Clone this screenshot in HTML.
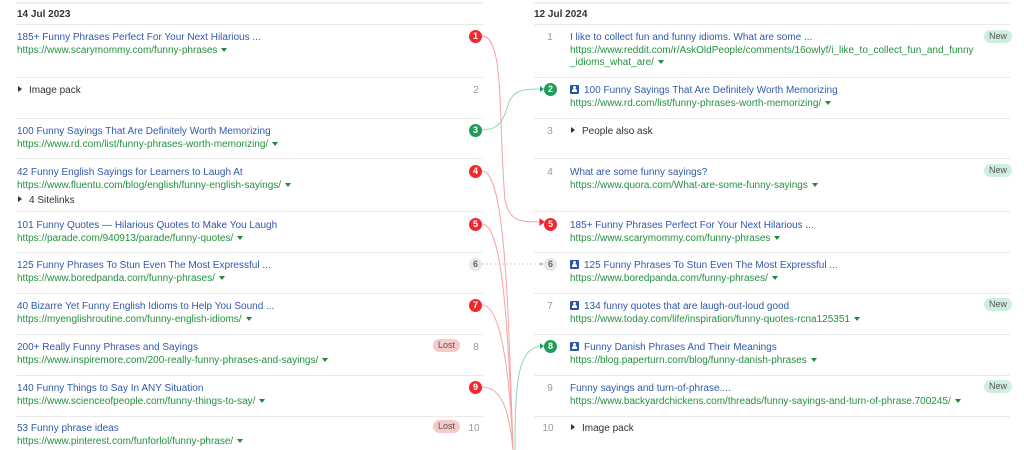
<!DOCTYPE html>
<html><head><meta charset="utf-8"><style>
*{margin:0;padding:0;box-sizing:border-box}
body{width:1024px;height:450px;overflow:hidden;background:#fff;font-family:"Liberation Sans",Arial,sans-serif;font-size:10px;position:relative}
.a{position:absolute;white-space:nowrap;line-height:12px;margin-top:1.5px}
.t{color:#3159ab}
.u{color:#24913f}
.u:after{content:"";display:inline-block;margin-left:4px;border-left:3px solid transparent;border-right:3px solid transparent;border-top:4px solid #1f8a3c;vertical-align:1px}
.g{color:#333}
.n{color:#999;text-align:center;width:14px}
.h{font-weight:bold;color:#333}
.sl{position:absolute;height:1px;background:#e9e9e9}
.b{position:absolute;width:13px;height:13px;border-radius:50%;color:#fff;font-weight:bold;font-size:9px;line-height:13px;text-align:center}
.r{background:#f0282d}.gr{background:#1e9c58}.gy{background:#e8e8e8;color:#666}
.tri:before{content:"";display:inline-block;border-top:3px solid transparent;border-bottom:3px solid transparent;border-left:4px solid #333;margin-right:7px;vertical-align:1px}
.pill{position:absolute;height:13px;line-height:13px;border-radius:7px;font-size:9px;padding:0 5px;color:#555}
.lost{background:#f8c9c9}.new{background:#cfeedd}
.ic{display:inline-block;width:9px;height:9px;background:#2b55a6;margin-right:5px;vertical-align:-1px;position:relative;border-radius:1px}
.ic:after{content:"";position:absolute;left:2px;bottom:2px;width:5px;height:3px;background:#fff;border-radius:2px 2px 0 0}
.ic:before{content:"";position:absolute;left:3px;top:1.5px;width:3px;height:3px;background:#fff;border-radius:50%}
</style></head><body>
<div class="sl" style="left:16px;top:2px;width:467px;background:#eee;height:2px"></div>
<div class="sl" style="left:534px;top:2px;width:476px;background:#eee;height:2px"></div>
<div class="a h" style="left:17px;top:7px">14 Jul 2023</div>
<div class="a h" style="left:534px;top:7px">12 Jul 2024</div>

<div class="sl" style="left:16px;top:24px;width:467px"></div><div class="sl" style="left:534px;top:24px;width:476px"></div>
<div class="sl" style="left:16px;top:77px;width:467px"></div><div class="sl" style="left:534px;top:77px;width:476px"></div>
<div class="sl" style="left:16px;top:118px;width:467px"></div><div class="sl" style="left:534px;top:118px;width:476px"></div>
<div class="sl" style="left:16px;top:158px;width:467px"></div><div class="sl" style="left:534px;top:158px;width:476px"></div>
<div class="sl" style="left:16px;top:211px;width:467px"></div><div class="sl" style="left:534px;top:211px;width:476px"></div>
<div class="sl" style="left:16px;top:252px;width:467px"></div><div class="sl" style="left:534px;top:252px;width:476px"></div>
<div class="sl" style="left:16px;top:293px;width:467px"></div><div class="sl" style="left:534px;top:293px;width:476px"></div>
<div class="sl" style="left:16px;top:334px;width:467px"></div><div class="sl" style="left:534px;top:334px;width:476px"></div>
<div class="sl" style="left:16px;top:375px;width:467px"></div><div class="sl" style="left:534px;top:375px;width:476px"></div>
<div class="sl" style="left:16px;top:416px;width:467px"></div><div class="sl" style="left:534px;top:416px;width:476px"></div>

<svg style="position:absolute;left:0;top:0" width="1024" height="450" fill="none" stroke-width="1">
<g stroke="#f7a3a3">
<path d="M482,36 C505,36 498,120 505,200 C510,222 520,222 543,222"/>
<path d="M482,171 C505,171 508,300 513,450"/>
<path d="M482,224 C502,224 508,320 513,450"/>
<path d="M482,305 C502,305 510,380 513,450"/>
<path d="M482,387 C505,387 510,420 513,450"/>
</g>
<g stroke="#f0282d" fill="#f0282d"><path d="M540,219 L544,222 L540,225Z"/></g>
<g stroke="#8fd9b0">
<path d="M482,130 C505,130 505,110 510,100 C516,89 525,89 543,89"/>
<path d="M515,450 C515,380 518,346 543,346"/>
</g>
<g fill="#1e9c58"><path d="M540,86 L544,89 L540,92Z"/><path d="M540,343 L544,346 L540,349Z"/></g>
<path d="M482,264 L542,264" stroke="#ccc" stroke-dasharray="2,2"/>
<path d="M540,262 L544,264 L540,266Z" fill="#bbb"/>
</svg>

<div class="a t" style="left:17px;top:30px">185+ Funny Phrases Perfect For Your Next Hilarious ...</div>
<div class="a u" style="left:17px;top:43px">https://www.scarymommy.com/funny-phrases</div>
<div class="b r" style="left:469px;top:30px">1</div>

<div class="a g tri" style="left:18px;top:83px">Image pack</div>
<div class="a n" style="left:469px;top:83px">2</div>

<div class="a t" style="left:17px;top:124px">100 Funny Sayings That Are Definitely Worth Memorizing</div>
<div class="a u" style="left:17px;top:137px">https://www.rd.com/list/funny-phrases-worth-memorizing/</div>
<div class="b gr" style="left:469px;top:124px">3</div>

<div class="a t" style="left:17px;top:165px">42 Funny English Sayings for Learners to Laugh At</div>
<div class="a u" style="left:17px;top:178px">https://www.fluentu.com/blog/english/funny-english-sayings/</div>
<div class="a g tri" style="left:18px;top:193px">4 Sitelinks</div>
<div class="b r" style="left:469px;top:165px">4</div>

<div class="a t" style="left:17px;top:218px">101 Funny Quotes — Hilarious Quotes to Make You Laugh</div>
<div class="a u" style="left:17px;top:231px">https://parade.com/940913/parade/funny-quotes/</div>
<div class="b r" style="left:469px;top:218px">5</div>

<div class="a t" style="left:17px;top:258px">125 Funny Phrases To Stun Even The Most Expressful ...</div>
<div class="a u" style="left:17px;top:271px">https://www.boredpanda.com/funny-phrases/</div>
<div class="b gy" style="left:469px;top:258px">6</div>

<div class="a t" style="left:17px;top:299px">40 Bizarre Yet Funny English Idioms to Help You Sound ...</div>
<div class="a u" style="left:17px;top:312px">https://myenglishroutine.com/funny-english-idioms/</div>
<div class="b r" style="left:469px;top:299px">7</div>

<div class="a t" style="left:17px;top:340px">200+ Really Funny Phrases and Sayings</div>
<div class="a u" style="left:17px;top:353px">https://www.inspiremore.com/200-really-funny-phrases-and-sayings/</div>
<div class="pill lost" style="left:433px;top:339px">Lost</div>
<div class="a n" style="left:469px;top:340px">8</div>

<div class="a t" style="left:17px;top:381px">140 Funny Things to Say In ANY Situation</div>
<div class="a u" style="left:17px;top:394px">https://www.scienceofpeople.com/funny-things-to-say/</div>
<div class="b r" style="left:469px;top:381px">9</div>

<div class="a t" style="left:17px;top:421px">53 Funny phrase ideas</div>
<div class="a u" style="left:17px;top:434px">https://www.pinterest.com/funforlol/funny-phrase/</div>
<div class="pill lost" style="left:433px;top:420px">Lost</div>
<div class="a n" style="left:467px;top:421px">10</div>

<div class="a n" style="left:543px;top:30px">1</div>
<div class="a t" style="left:570px;top:30px">I like to collect fun and funny idioms. What are some ...</div>
<div class="a u" style="left:570px;top:43px"><span style="display:block">https://www.reddit.com/r/AskOldPeople/comments/16owlyf/i_like_to_collect_fun_and_funny</span>_idioms_what_are/</div>
<div class="pill new" style="left:984px;top:30px">New</div>

<div class="b gr" style="left:544px;top:83px">2</div>
<div class="a t" style="left:570px;top:83px"><span class="ic"></span>100 Funny Sayings That Are Definitely Worth Memorizing</div>
<div class="a u" style="left:570px;top:96px">https://www.rd.com/list/funny-phrases-worth-memorizing/</div>

<div class="a n" style="left:543px;top:124px">3</div>
<div class="a g tri" style="left:571px;top:124px">People also ask</div>

<div class="a n" style="left:543px;top:165px">4</div>
<div class="a t" style="left:570px;top:165px">What are some funny sayings?</div>
<div class="a u" style="left:570px;top:178px">https://www.quora.com/What-are-some-funny-sayings</div>
<div class="pill new" style="left:984px;top:164px">New</div>

<div class="b r" style="left:544px;top:218px">5</div>
<div class="a t" style="left:570px;top:218px">185+ Funny Phrases Perfect For Your Next Hilarious ...</div>
<div class="a u" style="left:570px;top:231px">https://www.scarymommy.com/funny-phrases</div>

<div class="b gy" style="left:544px;top:258px">6</div>
<div class="a t" style="left:570px;top:258px"><span class="ic"></span>125 Funny Phrases To Stun Even The Most Expressful ...</div>
<div class="a u" style="left:570px;top:271px">https://www.boredpanda.com/funny-phrases/</div>

<div class="a n" style="left:543px;top:299px">7</div>
<div class="a t" style="left:570px;top:299px"><span class="ic"></span>134 funny quotes that are laugh-out-loud good</div>
<div class="a u" style="left:570px;top:312px">https://www.today.com/life/inspiration/funny-quotes-rcna125351</div>
<div class="pill new" style="left:984px;top:298px">New</div>

<div class="b gr" style="left:544px;top:340px">8</div>
<div class="a t" style="left:570px;top:340px"><span class="ic"></span>Funny Danish Phrases And Their Meanings</div>
<div class="a u" style="left:570px;top:353px">https://blog.paperturn.com/blog/funny-danish-phrases</div>

<div class="a n" style="left:543px;top:381px">9</div>
<div class="a t" style="left:570px;top:381px">Funny sayings and turn-of-phrase....</div>
<div class="a u" style="left:570px;top:394px">https://www.backyardchickens.com/threads/funny-sayings-and-turn-of-phrase.700245/</div>
<div class="pill new" style="left:984px;top:380px">New</div>

<div class="a n" style="left:541px;top:421px">10</div>
<div class="a g tri" style="left:571px;top:421px">Image pack</div>
</body></html>
